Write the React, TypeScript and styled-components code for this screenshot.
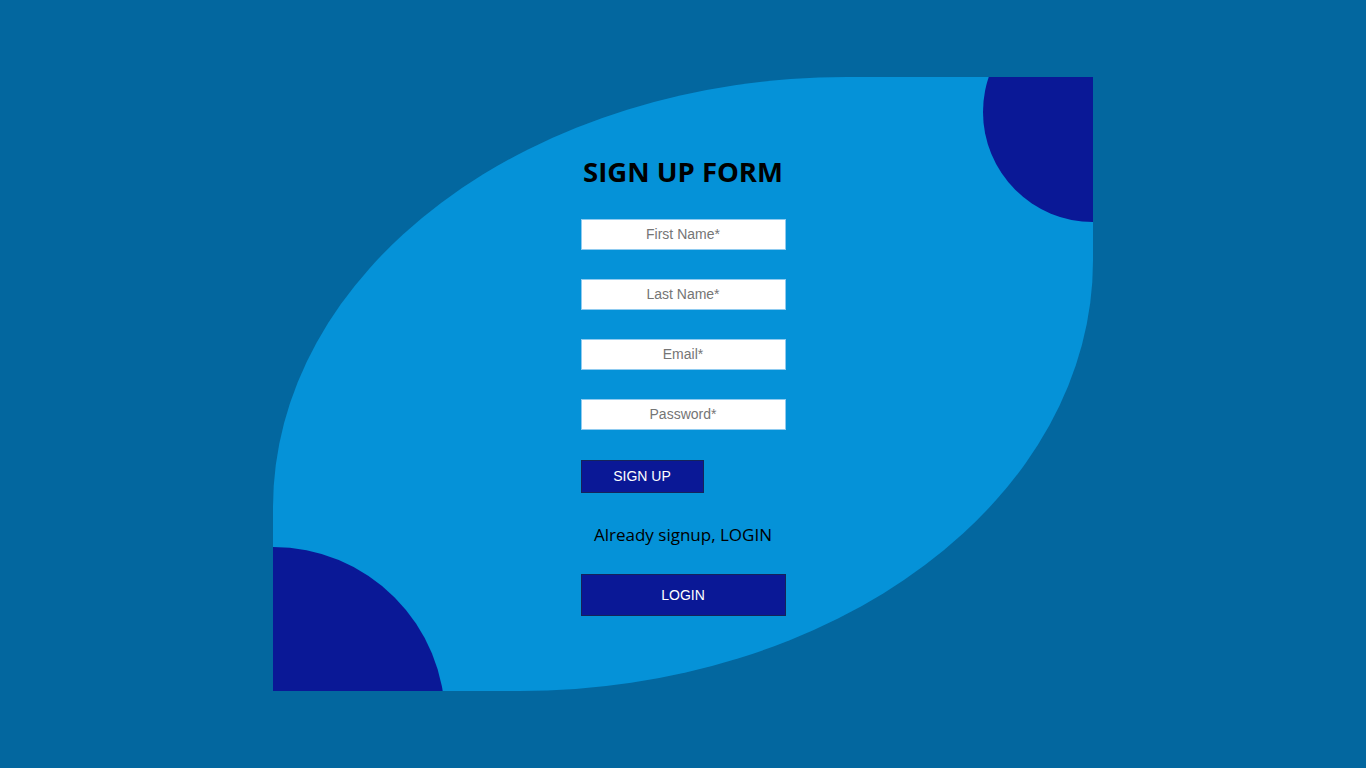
import React from "react";
import styled, { createGlobalStyle } from "styled-components";

const GlobalStyle = createGlobalStyle`
  html, body {
    margin: 0;
    padding: 0;
    background: #03679f;
  }
  * { box-sizing: border-box; }
`;

const Page = styled.div`
  width: 100vw;
  height: 100vh;
  display: flex;
  align-items: center;
  justify-content: center;
  background: #03679f;
  overflow: hidden;
`;

const Card = styled.div`
  position: relative;
  width: 60vw;
  height: 80vh;
  background: #0592d8;
  border-radius: 70% 0 70% 0;
  overflow: hidden;
  display: flex;
  flex-direction: column;
  align-items: center;
  padding-top: 78px;
`;

const Blob = styled.div<{ $size: number }>`
  position: absolute;
  width: ${(p) => p.$size}px;
  height: ${(p) => p.$size}px;
  border-radius: 50%;
  background: #0a1896;
`;

const TopBlob = styled(Blob)`
  right: -110px;
  top: -75px;
`;

const BottomBlob = styled(Blob)`
  left: -172px;
  top: 470px;
`;

const Form = styled.form`
  position: relative;
  z-index: 1;
  width: 205px;
  display: flex;
  flex-direction: column;
  align-items: center;
`;

const Title = styled.h1`
  margin: 0 -40px 30px;
  font-family: "Open Sans", "Noto Sans", sans-serif;
  font-weight: 700;
  font-size: 27.5px;
  line-height: 34px;
  color: #000;
  white-space: nowrap;
`;

const Field = styled.input`
  width: 205px;
  height: 31px;
  margin: 0 0 29px;
  border: 1px solid #8fcbf0;
  background: #fff;
  outline: none;
  text-align: center;
  font-family: "Liberation Sans", Arial, sans-serif;
  font-size: 14px;
  color: #333;
  &::placeholder {
    color: #757575;
  }
`;

const Button = styled.button<{ $wide?: boolean }>`
  width: ${(p) => (p.$wide ? "205px" : "123px")};
  height: ${(p) => (p.$wide ? "42px" : "33px")};
  margin-top: ${(p) => (p.$wide ? "0" : "1px")};
  align-self: flex-start;
  border: 1px solid #15235a;
  background: #0a1896;
  color: #fff;
  font-family: "Liberation Sans", Arial, sans-serif;
  font-size: 14px;
  padding: 0;
  cursor: pointer;
`;

const Note = styled.p`
  margin: 29px 0 26px;
  font-family: "Open Sans", "Noto Sans", sans-serif;
  font-size: 17px;
  line-height: 26px;
  color: #000;
  white-space: nowrap;
`;

export default function App() {
  return (
    <>
      <GlobalStyle />
      <Page>
        <Card>
          <TopBlob $size={220} />
          <BottomBlob $size={344} />
          <Form onSubmit={(e) => e.preventDefault()}>
            <Title>SIGN UP FORM</Title>
            <Field type="text" placeholder="First Name*" />
            <Field type="text" placeholder="Last Name*" />
            <Field type="email" placeholder="Email*" />
            <Field type="password" placeholder="Password*" />
            <Button type="submit">SIGN UP</Button>
            <Note>Already signup, LOGIN</Note>
            <Button type="button" $wide>
              LOGIN
            </Button>
          </Form>
        </Card>
      </Page>
    </>
  );
}
